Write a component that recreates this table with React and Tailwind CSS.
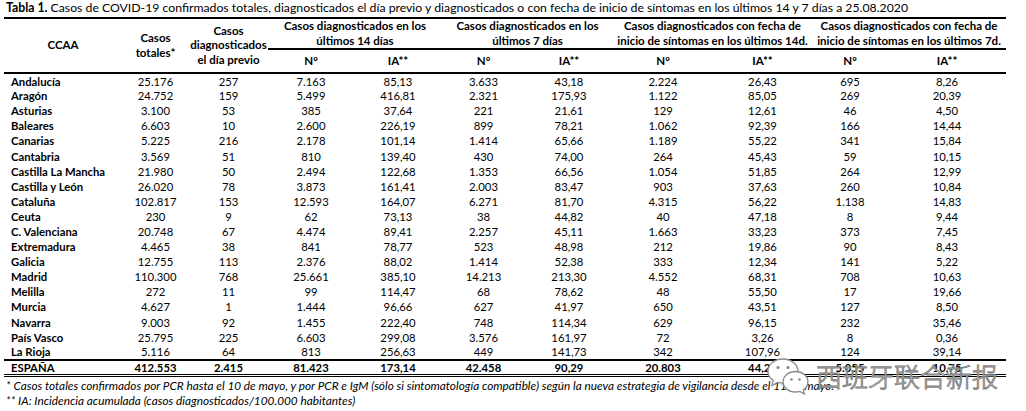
import React from "react";

const rows = [
  ["Andalucía","25.176","257","7.163","85,13","3.633","43,18","2.224","26,43","695","8,26"],
  ["Aragón","24.752","159","5.499","416,81","2.321","175,93","1.122","85,05","269","20,39"],
  ["Asturias","3.100","53","385","37,64","221","21,61","129","12,61","46","4,50"],
  ["Baleares","6.603","10","2.600","226,19","899","78,21","1.062","92,39","166","14,44"],
  ["Canarias","5.225","216","2.178","101,14","1.414","65,66","1.189","55,22","341","15,84"],
  ["Cantabria","3.569","51","810","139,40","430","74,00","264","45,43","59","10,15"],
  ["Castilla La Mancha","21.980","50","2.494","122,68","1.353","66,56","1.054","51,85","264","12,99"],
  ["Castilla y León","26.020","78","3.873","161,41","2.003","83,47","903","37,63","260","10,84"],
  ["Cataluña","102.817","153","12.593","164,07","6.271","81,70","4.315","56,22","1.138","14,83"],
  ["Ceuta","230","9","62","73,13","38","44,82","40","47,18","8","9,44"],
  ["C. Valenciana","20.748","67","4.474","89,41","2.257","45,11","1.663","33,23","373","7,45"],
  ["Extremadura","4.465","38","841","78,77","523","48,98","212","19,86","90","8,43"],
  ["Galicia","12.755","113","2.376","88,02","1.414","52,38","333","12,34","141","5,22"],
  ["Madrid","110.300","768","25.661","385,10","14.213","213,30","4.552","68,31","708","10,63"],
  ["Melilla","272","11","99","114,47","68","78,62","48","55,50","17","19,66"],
  ["Murcia","4.627","1","1.444","96,66","627","41,97","650","43,51","127","8,50"],
  ["Navarra","9.003","92","1.455","222,40","748","114,34","629","96,15","232","35,46"],
  ["País Vasco","25.795","225","6.603","299,08","3.576","161,97","72","3,26","8","0,36"],
  ["La Rioja","5.116","64","813","256,63","449","141,73","342","107,96","124","39,14"],
];
const total = ["ESPAÑA","412.553","2.415","81.423","173,14","42.458","90,29","20.803","44,24","5.055","10,75"];

const widths = [118, 67, 79, 86, 88, 83, 88, 100, 99, 76, 118];

function WeChat() {
  return (
    <svg width="46" height="40" viewBox="0 0 46 40" fill="none">
      <path d="M17 3C8.2 3 2 8.6 2 15.2c0 3.8 2 7 5.2 9.2L6 29.5l5.6-3.1c1.7.5 3.5.8 5.4.8 8.8 0 15-5.6 15-12S25.8 3 17 3z" fill="#fff" stroke="#8a8a8a" strokeWidth="1.3" />
      <path d="M29.5 15.5c-7 0-12.4 4.6-12.4 10.2S22.5 36 29.5 36c1.5 0 3-.2 4.3-.6l4.6 2.5-1-4c2.8-1.9 4.5-4.8 4.5-8.1 0-5.6-5.4-10.3-12.4-10.3z" fill="#fff" stroke="#8a8a8a" strokeWidth="1.3" />
      <circle cx="12" cy="11.5" r="1.6" fill="#8a8a8a" />
      <circle cx="22" cy="11.5" r="1.6" fill="#8a8a8a" />
      <circle cx="25.5" cy="23.5" r="1.3" fill="#8a8a8a" />
      <circle cx="33.5" cy="23.5" r="1.3" fill="#8a8a8a" />
    </svg>
  );
}

export default function App() {
  return (
    <div className="relative w-[1026px] h-[411px] overflow-hidden bg-white text-black font-['Lato','Noto_Sans',sans-serif]">
      <div className="pl-[6px] pt-[0px] h-[17px] text-[12.25px] leading-[15px] whitespace-nowrap">
        <span className="font-bold">Tabla 1.</span> Casos de COVID-19 confirmados totales, diagnosticados el día previo y diagnosticados o con fecha de inicio de síntomas en los últimos 14 y 7 días a 25.08.2020
      </div>
      <table className="ml-[4px] w-[1002px] table-fixed border-collapse">
        <colgroup>
          {widths.map((w, i) => (
            <col key={i} style={{ width: w }} />
          ))}
        </colgroup>
        <thead>
          <tr className="h-[31px] text-[11.5px] leading-[14.5px] font-bold">
            <th rowSpan={2} className="border-t-2 border-b-2 border-black text-center align-middle font-bold">CCAA</th>
            <th rowSpan={2} className="border-t-2 border-b-2 border-black text-center align-middle font-bold">Casos<br />totales*</th>
            <th rowSpan={2} className="border-t-2 border-b-2 border-black text-center align-middle font-bold">Casos<br />diagnosticados<br />el día previo</th>
            <th colSpan={2} className="border-t-2 border-b-2 border-black text-center align-middle font-bold">Casos diagnosticados en los<br />últimos 14 días</th>
            <th colSpan={2} className="border-t-2 border-b-2 border-black text-center align-middle font-bold">Casos diagnosticados en los<br />últimos 7 días</th>
            <th colSpan={2} className="border-t-2 border-b-2 border-black text-center align-middle font-bold">Casos diagnosticados con fecha de<br />inicio de síntomas en los últimos 14d.</th>
            <th colSpan={2} className="border-t-2 border-b-2 border-black text-center align-middle font-bold">Casos diagnosticados con fecha de<br />inicio de síntomas en los últimos 7d.</th>
          </tr>
          <tr className="h-[24px] text-[11.5px] leading-[14px] font-bold">
            {["Nº","IA**","Nº","IA**","Nº","IA**","Nº","IA**"].map((t, i) => (
              <th key={i} className="border-b-2 border-black text-center align-middle font-bold">{t}</th>
            ))}
          </tr>
        </thead>
        <tbody className="text-[11.3px] leading-[13px]">
          {rows.map((r, ri) => (
            <tr key={ri} className="h-[15.1px]">
              {r.map((c, ci) => (
                <td
                  key={ci}
                  className={
                    (ci === 0 ? "pl-[7px] text-left font-bold " : "text-center ") +
                    (ri === 0 ? "pt-[1px] " : "") +
                    (ri === rows.length - 1 ? "border-b-2 border-black " : "") +
                    "p-0 align-middle whitespace-nowrap"
                  }
                >
                  {c}
                </td>
              ))}
            </tr>
          ))}
          <tr className="h-[15px] font-bold">
            {total.map((c, ci) => (
              <td
                key={ci}
                className={
                  (ci === 0 ? "pl-[7px] text-left " : "text-center ") +
                  "border-b-[3px] border-double border-black p-0 align-middle whitespace-nowrap"
                }
              >
                {c}
              </td>
            ))}
          </tr>
        </tbody>
      </table>
      <div className="pl-[6px] pt-[1px] text-[11.8px] leading-[15px] italic whitespace-nowrap">
        <div>* Casos totales confirmados por PCR hasta el 10 de mayo, y por PCR e IgM (sólo si sintomatología compatible) según la nueva estrategia de vigilancia desde el 11 de mayo.</div>
        <div>** IA: Incidencia acumulada (casos diagnosticados/100.000 habitantes)</div>
      </div>

      <div className="absolute left-[766px] top-[356px] flex items-center gap-[4px]">
        <WeChat />
        <span className="text-[26px] leading-[30px] text-white font-light font-['Noto_Sans_CJK_SC',sans-serif] [-webkit-text-stroke:0.9px_#7a7a7a]">西班牙联合新报</span>
      </div>
    </div>
  );
}
